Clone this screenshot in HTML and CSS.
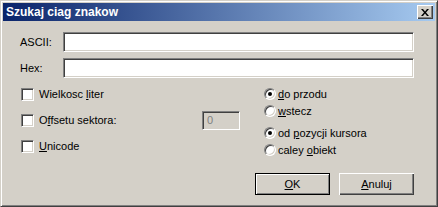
FILE: index.html
```html
<!DOCTYPE html>
<html lang="pl">
    <head>
        <meta charset="UTF-8" />
        <title>Szukaj ciag znakow</title>
        <link rel="stylesheet" href="styles.css">
    </head>
    <body>
        <div class="window">
            <!-- pasek tytulu -->
            <div class="titlebar">
                <span class="title">Szukaj ciag znakow</span>
                <button class="close">
                    <svg width="8" height="7" viewBox="0 0 8 7">
                        <path d="M0 0h2l2 2.5l2-2.5h2l-3 3.5l3 3.5h-2l-2-2.5l-2 2.5h-2l3-3.5z" fill="#000"/>
                    </svg>
                </button>
            </div>

            <div class="content">
                <div class="field">
                    <label class="field-label">ASCII:</label>
                    <div class="edit"></div>
                </div>
                <div class="field">
                    <label class="field-label">Hex:</label>
                    <div class="edit"></div>
                </div>

                <div class="options">
                    <!-- pola wyboru -->
                    <div class="checks">
                        <div class="check-row">
                            <span class="checkbox"></span>
                            <span>Wielkosc <u>l</u>iter</span>
                        </div>
                        <div class="check-row">
                            <span class="checkbox"></span>
                            <span>O<u>f</u>fsetu sektora:</span>
                            <div class="edit small disabled">0</div>
                        </div>
                        <div class="check-row">
                            <span class="checkbox"></span>
                            <span><u>U</u>nicode</span>
                        </div>
                    </div>

                    <!-- przyciski opcji -->
                    <div class="radios">
                        <div class="radio-group">
                            <div class="radio-row">
                                <span class="radio checked"></span>
                                <span><u>d</u>o przodu</span>
                            </div>
                            <div class="radio-row">
                                <span class="radio"></span>
                                <span><u>w</u>stecz</span>
                            </div>
                        </div>
                        <div class="radio-group">
                            <div class="radio-row">
                                <span class="radio checked"></span>
                                <span>od <u>p</u>ozycji kursora</span>
                            </div>
                            <div class="radio-row">
                                <span class="radio"></span>
                                <span>caley <u>o</u>biekt</span>
                            </div>
                        </div>
                    </div>
                </div>

                <div class="buttons">
                    <button class="btn default"><u>O</u>K</button>
                    <button class="btn"><u>A</u>nuluj</button>
                </div>
            </div>
        </div>
    </body>
</html>
```

FILE: styles.css
```css
body {
    margin: 0;
    padding: 0;
    font-family: "Liberation Sans", Arial, sans-serif;
    font-size: 11px;
    color: #000;
    background-color: #d4d0c8;
}

.window {
    width: 438px;
    height: 207px;
    box-sizing: border-box;
    background-color: #d4d0c8;
    border: 1px solid;
    border-color: #d4d0c8 #404040 #404040 #d4d0c8;
    box-shadow: inset 1px 1px #fff, inset -1px -1px #808080;
    padding: 2px;
    display: flex;
    flex-direction: column;
}

.titlebar {
    height: 18px;
    display: flex;
    align-items: center;
    justify-content: space-between;
    background: linear-gradient(to right, #0a246a, #a6caf0);
    padding: 0 2px 0 3px;
}

.title {
    color: #fff;
    font-weight: bold;
    font-size: 12px;
}

.close {
    width: 16px;
    height: 14px;
    padding: 0;
    border: none;
    background-color: #d4d0c8;
    box-shadow: inset 1px 1px #fff, inset -1px -1px #404040, inset -2px -2px #808080;
    display: flex;
    justify-content: center;
    align-items: center;
}

.content {
    padding: 11px 21px 0 17px;
    display: flex;
    flex-direction: column;
    gap: 6px;
}

.field {
    display: flex;
    align-items: center;
    height: 20px;
}

.field-label {
    width: 43px;
}

.edit {
    flex: 1;
    height: 20px;
    box-sizing: border-box;
    background-color: #fff;
    border: 1px solid;
    border-color: #808080 #fff #fff #808080;
    box-shadow: inset 1px 1px #404040, inset -1px -1px #d4d0c8;
}

.edit.small {
    flex: none;
    width: 38px;
    height: 19px;
    margin-left: auto;
    padding: 2px 0 0 4px;
}

.edit.disabled {
    background-color: #d4d0c8;
    color: #808080;
}

.options {
    display: flex;
}

.checks {
    width: 220px;
    display: flex;
    flex-direction: column;
    gap: 6px;
}

.check-row {
    height: 20px;
    display: flex;
    align-items: center;
    gap: 5px;
}

.checkbox {
    width: 13px;
    height: 13px;
    box-sizing: border-box;
    margin-left: 1px;
    background-color: #fff;
    border: 1px solid;
    border-color: #808080 #fff #fff #808080;
    box-shadow: inset 1px 1px #404040, inset -1px -1px #d4d0c8;
}

.radios {
    margin-left: 24px;
    margin-top: 1px;
    display: flex;
    flex-direction: column;
    gap: 5px;
}

.radio-row {
    height: 17px;
    display: flex;
    align-items: center;
    gap: 2px;
}

.radio {
    width: 12px;
    height: 12px;
    box-sizing: border-box;
    border-radius: 50%;
    background-color: #fff;
    border: 1px solid;
    border-color: #808080 #fff #fff #808080;
    box-shadow: inset 1px 1px #404040, inset -1px -1px #d4d0c8;
    display: flex;
    justify-content: center;
    align-items: center;
}

.radio.checked::after {
    content: "";
    width: 4px;
    height: 4px;
    border-radius: 50%;
    background-color: #000;
}

.buttons {
    margin-top: 9px;
    display: flex;
    justify-content: flex-end;
    gap: 9px;
}

.btn {
    width: 75px;
    height: 22px;
    padding: 0;
    font-family: inherit;
    font-size: 11px;
    color: #000;
    background-color: #d4d0c8;
    border: none;
    box-shadow: inset 1px 1px #fff, inset -1px -1px #404040, inset -2px -2px #808080;
}

.btn.default {
    border: 1px solid #000;
    box-shadow: inset 1px 1px #fff, inset -1px -1px #808080;
}
```
